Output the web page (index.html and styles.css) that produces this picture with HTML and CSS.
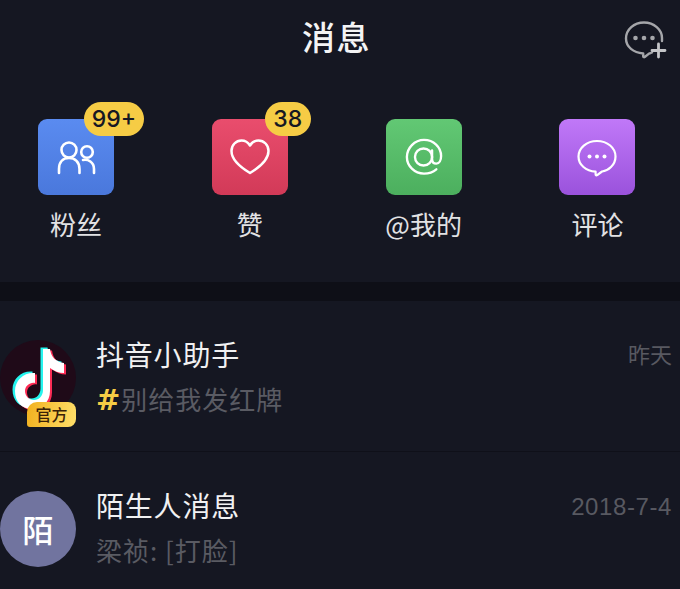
FILE: index.html
```html
<!DOCTYPE html>
<html lang="zh">
<head>
<meta charset="utf-8">
<title>消息</title>
<link rel="stylesheet" href="styles.css">
</head>
<body>
<header class="top">
  <h1 class="title">消息</h1>
  <svg class="new-chat" viewBox="0 0 44 40" fill="none" stroke="#a5a6aa" stroke-width="2.400" stroke-linecap="round" stroke-linejoin="round">
    <path d="M28 32.500c-1 .4-2 .7-3 1.100l-4.300 3.400c-.8.500-1.500 0-1.500-.8v-2.700C9.500 32.500 2 27 2 18.500 2 9.500 10 2.500 20 2.500s18 7 18 15.500v3"/>
    <circle cx="11.500" cy="18" r="2.300" fill="#a5a6aa" stroke="none"/>
    <circle cx="20" cy="18" r="2.300" fill="#a5a6aa" stroke="none"/>
    <circle cx="28.500" cy="18" r="2.300" fill="#a5a6aa" stroke="none"/>
    <path d="M34.500 24v13M28 30.500h13" stroke="#c4c5c8" stroke-width="2.800"/>
  </svg>
</header>

<section class="shortcuts">
  <div class="shortcut">
    <div class="tile tile-blue">
      <svg class="glyph glyph-fans" viewBox="0 0 40 36" fill="none" stroke="#fff" stroke-width="2.600" stroke-linecap="round" stroke-linejoin="round">
        <circle cx="13" cy="10" r="7.500"/>
        <circle cx="31" cy="12" r="5.800"/>
        <path d="M3 33v-4c0-7 4-11 10-11s10.500 4 10.500 11v4"/>
        <path d="M27 20c5-1 11 2 11 9v4"/>
      </svg>
      <span class="badge badge-wide">99+</span>
    </div>
    <span class="label">粉丝</span>
  </div>
  <div class="shortcut">
    <div class="tile tile-red">
      <svg class="glyph" viewBox="0 0 40 36" fill="none" stroke="#fff" stroke-width="2.500" stroke-linejoin="round">
        <path d="M20 34C10 28 1.500 21 1.500 12 1.500 6 6 1.500 11.500 1.500c3.500 0 6.500 1.700 8.500 5 2-3.300 5-5 8.500-5C34 1.500 38.500 6 38.500 12 38.500 21 30 28 20 34z"/>
      </svg>
      <span class="badge">38</span>
    </div>
    <span class="label">赞</span>
  </div>
  <div class="shortcut">
    <div class="tile tile-green">
      <svg class="glyph glyph-at" viewBox="0 0 40 40" fill="none" stroke="#fff" stroke-width="2.500" stroke-linecap="round">
        <path d="M33 33c-3.500 3-8 4.500-13 4.500C10 37.500 2 29.500 2 20S10 2 20 2s18 7.500 18 17c0 4.500-2 8-5 8s-4.500-2-4.500-5V13"/>
        <circle cx="19.500" cy="20" r="9"/>
      </svg>
    </div>
    <span class="label">@我的</span>
  </div>
  <div class="shortcut">
    <div class="tile tile-purple">
      <svg class="glyph glyph-comment" viewBox="0 0 40 38" fill="none" stroke="#fff" stroke-width="2.200" stroke-linejoin="round">
        <path d="M20 2c10.500 0 18.500 6.800 18.500 15.500S31 32 25 32.500l-4.800 3.600c-.8.500-1.600.1-1.600-.8V32.700C9 32 1.500 26 1.500 17.500S9.500 2 20 2z"/>
        <circle cx="12.500" cy="17.500" r="2" fill="#fff" stroke="none"/>
        <circle cx="20" cy="17.500" r="2" fill="#fff" stroke="none"/>
        <circle cx="27.500" cy="17.500" r="2" fill="#fff" stroke="none"/>
      </svg>
    </div>
    <span class="label">评论</span>
  </div>
</section>

<div class="divider"></div>

<section class="messages">
  <article class="row row-first">
    <div class="avatar avatar-tiktok">
      <svg class="note" viewBox="0 0 60 66">
        <path d="M33 3h9c1 8 6 13 14 14v10c-5 0-10-2-14-5v23c0 11-8 18-18 18S7 56 7 45s9-19 20-18v10c-5-1-10 3-10 8s4 9 9 9 9-4 9-10V3z" fill="#25f4ee" transform="translate(-2.500 -1.500)"/>
        <path d="M33 3h9c1 8 6 13 14 14v10c-5 0-10-2-14-5v23c0 11-8 18-18 18S7 56 7 45s9-19 20-18v10c-5-1-10 3-10 8s4 9 9 9 9-4 9-10V3z" fill="#fe2c55" transform="translate(2 1.500)"/>
        <path d="M33 3h9c1 8 6 13 14 14v10c-5 0-10-2-14-5v23c0 11-8 18-18 18S7 56 7 45s9-19 20-18v10c-5-1-10 3-10 8s4 9 9 9 9-4 9-10V3z" fill="#fff"/>
      </svg>
      <span class="official">官方</span>
    </div>
    <div class="body">
      <div class="name">抖音小助手</div>
      <div class="preview"><span class="hash">#</span>别给我发红牌</div>
    </div>
    <time class="time">昨天</time>
  </article>
  <article class="row row-second">
    <div class="avatar avatar-letter">陌</div>
    <div class="body">
      <div class="name">陌生人消息</div>
      <div class="preview">梁祯: [打脸]</div>
    </div>
    <time class="time time-date">2018-7-4</time>
  </article>
</section>
</body>
</html>
```

FILE: styles.css
```css
* { box-sizing: border-box; }
html, body { margin: 0; height: 100%; }
body {
  width: 680px;
  height: 589px;
  overflow: hidden;
  background: #151722;
  color: #fff;
  font-family: "Noto Sans CJK SC", "Liberation Sans", sans-serif;
}

.top {
  height: 78px;
  position: relative;
  display: flex;
  justify-content: center;
  align-items: center;
  padding: 0 7px 5px 0;
}
.title {
  margin: 0;
  font-size: 33px;
  font-weight: 500;
  line-height: 1;
  letter-spacing: 1.500px;
  color: #f4f4f5;
}
.new-chat {
  position: absolute;
  left: 624px;
  top: 20px;
  width: 44px;
  height: 40px;
}

.shortcuts {
  display: flex;
  justify-content: space-between;
  padding: 41px 44.600px 0 38px;
  height: 204px;
}
.shortcut {
  width: 76px;
  display: flex;
  flex-direction: column;
  align-items: center;
}
.tile {
  position: relative;
  width: 76px;
  height: 76px;
  border-radius: 9px;
  display: flex;
  align-items: center;
  justify-content: center;
}
.tile-blue { background: linear-gradient(#5a8bf0, #4a78dc); }
.tile-red { background: linear-gradient(#e94d6d, #d23a58); }
.tile-green { background: linear-gradient(#62c874, #4caf5e); }
.tile-purple { background: linear-gradient(#c078f8, #9a52dc); }

.glyph { width: 40px; height: 36px; }
.glyph-fans { margin-top: 1px; }
.glyph-at { width: 38px; height: 38px; }
.glyph-comment { height: 38px; margin-top: 2px; }

.badge {
  position: absolute;
  left: 53px;
  top: -17px;
  height: 34px;
  width: 46px;
  border-radius: 17px;
  background: #f6cc45;
  color: #161823;
  font-family: "Inter", "Liberation Sans", sans-serif;
  font-size: 23px;
  font-weight: 500;
  line-height: 34px;
  text-align: center;
}
.badge-wide {
  left: 46px;
  width: 60px;
}

.label {
  margin-top: 12px;
  font-size: 26px;
  line-height: 33px;
  white-space: nowrap;
  color: #e2e2e4;
  font-weight: 400;
}

.divider {
  height: 19px;
  background: #0e0f17;
}

.row {
  display: flex;
  align-items: flex-start;
  position: relative;
  padding-right: 8px;
}
.row-first {
  height: 151px;
  padding-top: 39px;
  border-bottom: 1px solid #0f1019;
}
.row-second {
  padding-top: 39px;
}

.avatar {
  position: relative;
  flex: none;
  width: 76px;
  height: 76px;
  border-radius: 50%;
  margin-right: 20px;
}
.avatar-tiktok {
  background: #1f0a18;
  display: flex;
  align-items: center;
  justify-content: center;
}
.note {
  width: 60px;
  height: 66px;
  flex: none;
  margin-top: 2px;
}
.avatar-letter {
  background: #71749f;
  color: #fff;
  font-size: 31px;
  font-weight: 500;
  line-height: 76px;
  text-align: center;
}
.official {
  position: absolute;
  left: 27px;
  top: 62px;
  width: 49px;
  height: 25px;
  border-radius: 10px 8px 8px 3px;
  background: linear-gradient(100deg, #f2b01e, #ffe06a);
  color: #3a2208;
  font-size: 16px;
  font-weight: 500;
  line-height: 25px;
  text-align: center;
}

.body { flex: 1; min-width: 0; }
.name {
  font-size: 28px;
  line-height: 34px;
  letter-spacing: 0.800px;
  color: #f1f1f2;
  margin-top: -3px;
}
.preview {
  margin-top: 11px;
  font-size: 26px;
  line-height: 33px;
  letter-spacing: 1px;
  color: #5a5b63;
}
.hash {
  color: #f6cc45;
  font-family: "DejaVu Sans", sans-serif;
  font-weight: 700;
  font-size: 29px;
  line-height: 33px;
  letter-spacing: 1px;
}
.time {
  font-family: "Liberation Sans", "Noto Sans CJK SC", sans-serif;
  font-size: 22px;
  line-height: 30px;
  color: #585961;
  margin-top: 1px;
}
.time-date {
  font-size: 24px;
  letter-spacing: 0.600px;
}
```
